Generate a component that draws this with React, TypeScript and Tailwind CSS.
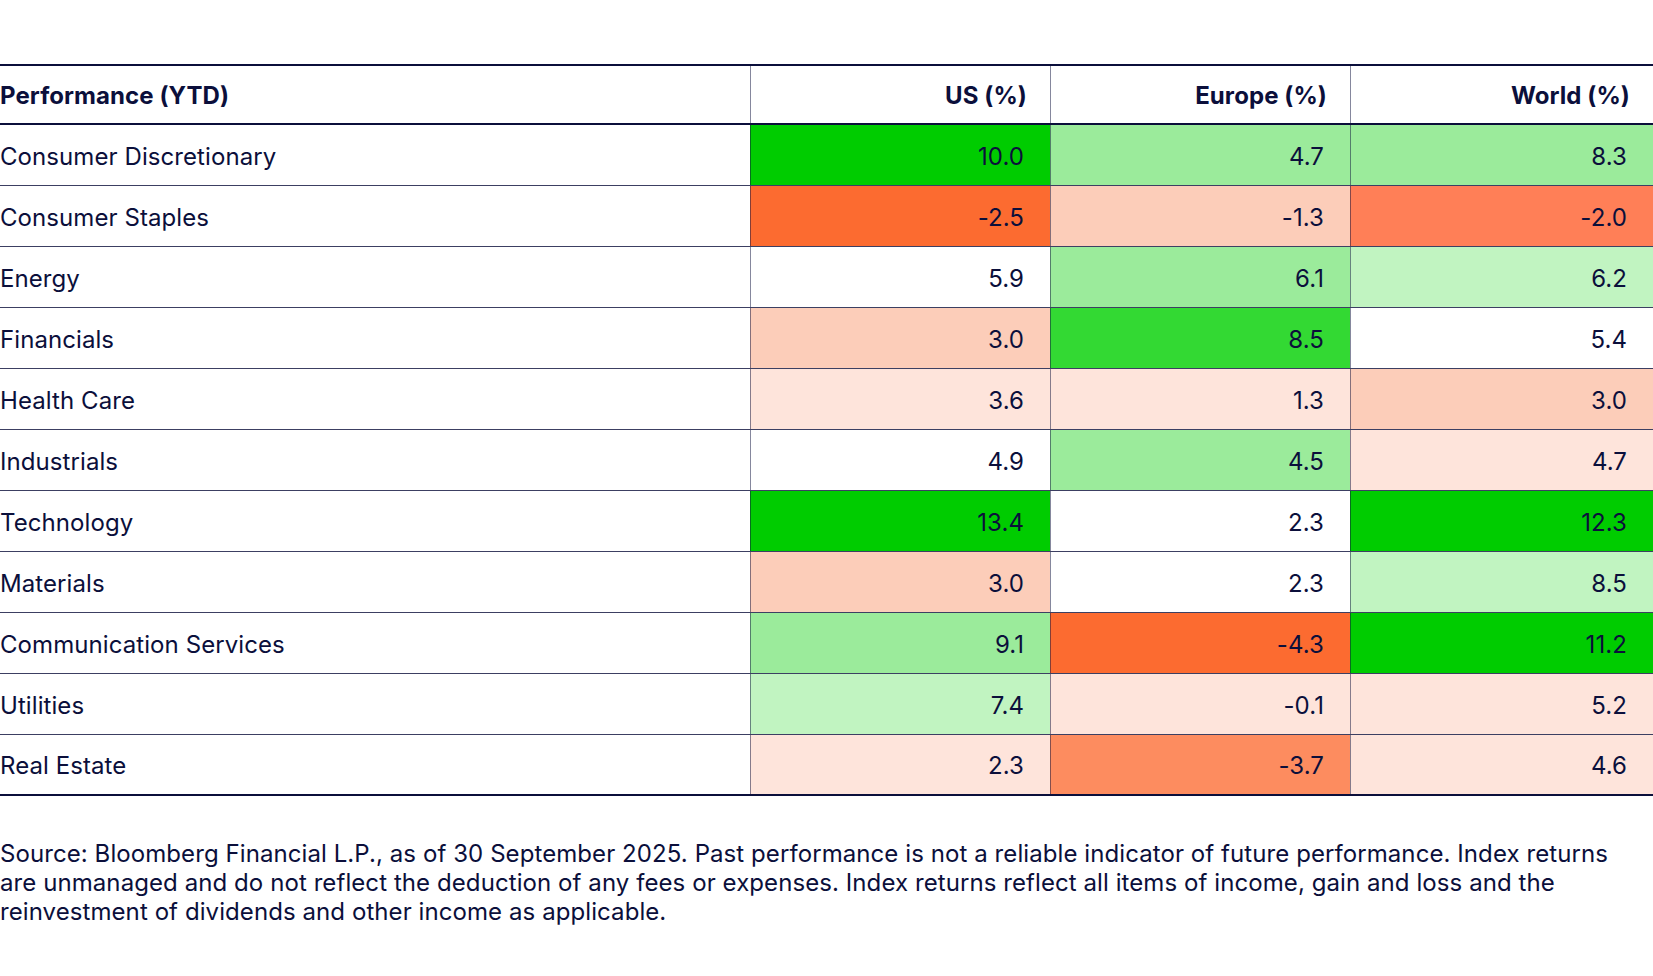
import React from 'react';

type Cell = { v: string; bg: string };
type Row = { name: string; cells: Cell[] };

const G1 = 'bg-[#00cc00]';
const G2 = 'bg-[#33d933]';
const G3 = 'bg-[#9beb9b]';
const G4 = 'bg-[#c1f4c1]';
const O1 = 'bg-[#fc6b30]';
const O2 = 'bg-[#ff7f57]';
const O3 = 'bg-[#fd8c5f]';
const P1 = 'bg-[#fccdb9]';
const P2 = 'bg-[#fee4db]';
const W = 'bg-white';

const rows: Row[] = [
  { name: 'Consumer Discretionary', cells: [{ v: '10.0', bg: G1 }, { v: '4.7', bg: G3 }, { v: '8.3', bg: G3 }] },
  { name: 'Consumer Staples', cells: [{ v: '-2.5', bg: O1 }, { v: '-1.3', bg: P1 }, { v: '-2.0', bg: O2 }] },
  { name: 'Energy', cells: [{ v: '5.9', bg: W }, { v: '6.1', bg: G3 }, { v: '6.2', bg: G4 }] },
  { name: 'Financials', cells: [{ v: '3.0', bg: P1 }, { v: '8.5', bg: G2 }, { v: '5.4', bg: W }] },
  { name: 'Health Care', cells: [{ v: '3.6', bg: P2 }, { v: '1.3', bg: P2 }, { v: '3.0', bg: P1 }] },
  { name: 'Industrials', cells: [{ v: '4.9', bg: W }, { v: '4.5', bg: G3 }, { v: '4.7', bg: P2 }] },
  { name: 'Technology', cells: [{ v: '13.4', bg: G1 }, { v: '2.3', bg: W }, { v: '12.3', bg: G1 }] },
  { name: 'Materials', cells: [{ v: '3.0', bg: P1 }, { v: '2.3', bg: W }, { v: '8.5', bg: G4 }] },
  { name: 'Communication Services', cells: [{ v: '9.1', bg: G3 }, { v: '-4.3', bg: O1 }, { v: '11.2', bg: G1 }] },
  { name: 'Utilities', cells: [{ v: '7.4', bg: G4 }, { v: '-0.1', bg: P2 }, { v: '5.2', bg: P2 }] },
  { name: 'Real Estate', cells: [{ v: '2.3', bg: P2 }, { v: '-3.7', bg: O3 }, { v: '4.6', bg: P2 }] },
];

const headers = ['US (%)', 'Europe (%)', 'World (%)'];

const App = () => {
  return (
    <div className="w-[1653px] min-h-[976px] bg-white pt-[64px] text-[#0b0f3b] tracking-[0.08px] font-['Inter','Liberation_Sans',sans-serif]">
      <div className="border-t-2 border-[#0b0f3b]">
        <div className="grid grid-cols-[750px_300px_300px_1fr] h-[59px] border-b-2 border-[#0b0f3b] text-[24px] font-bold">
          <div className="flex items-center pt-[2px]">Performance (YTD)</div>
          {headers.map((h) => (
            <div key={h} className="flex items-center justify-end pt-[2px] pr-[23px] border-l border-[#0b0f3b]/50">
              {h}
            </div>
          ))}
        </div>

        {rows.map((row, i) => (
          <div
            key={row.name}
            className={`grid grid-cols-[750px_300px_300px_1fr] h-[61px] text-[24px] ${
              i === rows.length - 1 ? 'border-b-2 border-[#0b0f3b]' : 'border-b border-[#0b0f3b]/80'
            }`}
          >
            <div className="flex items-center pt-[3px]">{row.name}</div>
            {row.cells.map((c, j) => (
              <div key={j} className={`flex items-center justify-end pt-[3px] pr-[26px] border-l border-[#0b0f3b]/50 ${c.bg}`}>
                {c.v}
              </div>
            ))}
          </div>
        ))}
      </div>

      <p className="mt-[43px] max-w-[1630px] text-[24px] leading-[29px]">
        Source: Bloomberg Financial L.P., as of 30 September 2025. Past performance is not a reliable indicator of future performance. Index returns
        are unmanaged and do not reflect the deduction of any fees or expenses. Index returns reflect all items of income, gain and loss and the
        reinvestment of dividends and other income as applicable.
      </p>
    </div>
  );
};

export default App;
